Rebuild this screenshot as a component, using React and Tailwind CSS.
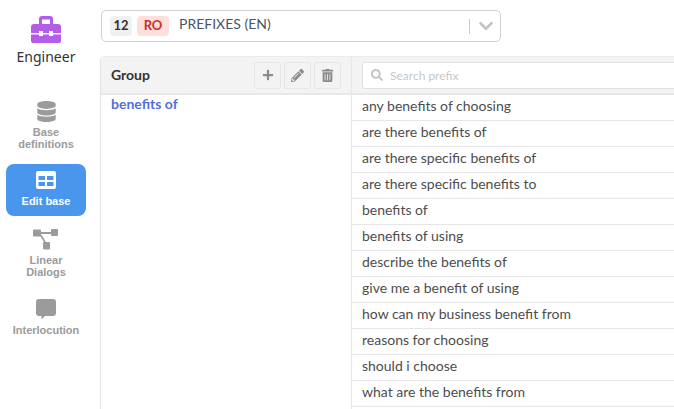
import { ChevronDown } from 'lucide-react';
import { FaPlus, FaPencilAlt, FaTrashAlt, FaSearch, FaDatabase } from 'react-icons/fa';

const prefixes = [
  'any benefits of choosing',
  'are there benefits of',
  'are there specific benefits of',
  'are there specific benefits to',
  'benefits of',
  'benefits of using',
  'describe the benefits of',
  'give me a benefit of using',
  'how can my business benefit from',
  'reasons for choosing',
  'should i choose',
  'what are the benefits from',
];

function ToolboxIcon() {
  return (
    <svg width="30" height="27" viewBox="0 0 30 27" fill="#b45de8">
      <path d="M8 8V3a3 3 0 0 1 3-3h8a3 3 0 0 1 3 3v5h-3V3.500h-8V8Z" />
      <path d="M3 8h24a3 3 0 0 1 3 3v6H22v-2h-4v2h-6v-2H8v2H0v-6a3 3 0 0 1 3-3Z" />
      <path d="M0 18.500h8V20h4v-1.500h6V20h4v-1.500h8V25a2 2 0 0 1-2 2H2a2 2 0 0 1-2-2Z" />
    </svg>
  );
}

function TableIcon() {
  return (
    <svg width="20" height="18" viewBox="0 0 20 18">
      <rect width="20" height="18" rx="2" fill="#fff" />
      <rect x="2.500" y="5" width="6.500" height="4" fill="#4a96ec" />
      <rect x="11" y="5" width="6.500" height="4" fill="#4a96ec" />
      <rect x="2.500" y="11" width="6.500" height="4" fill="#4a96ec" />
      <rect x="11" y="11" width="6.500" height="4" fill="#4a96ec" />
    </svg>
  );
}

function SitemapIcon() {
  return (
    <svg width="26" height="21" viewBox="0 0 26 21" fill="#9b9b9b">
      <rect x="0" y="0.500" width="8" height="7" rx="1" />
      <rect x="18" y="0" width="7" height="7" rx="1" />
      <rect x="10" y="13" width="7" height="7.500" rx="1" />
      <path d="M8 3h10v2H8z" />
      <path d="M7 6.500l1.500-.8 4.500 7.500-1.500.8z" />
    </svg>
  );
}

function CommentIcon() {
  return (
    <svg width="20" height="21" viewBox="0 0 20 21" fill="#9b9b9b">
      <path d="M3 0h14a3 3 0 0 1 3 3v11a3 3 0 0 1-3 3H9l-3.500 3.500V17H3a3 3 0 0 1-3-3V3a3 3 0 0 1 3-3Z" />
    </svg>
  );
}

function NavItem({ icon, label }) {
  return (
    <div className="flex flex-col items-center w-20 text-[11px] leading-3 font-bold text-center text-[#9b9b9b] font-['Liberation_Sans',sans-serif]">
      <div className="h-[21px] flex items-center justify-center mb-1">{icon}</div>
      {label}
    </div>
  );
}

function ToolButton({ children }) {
  return (
    <button className="w-[27px] h-[27px] flex items-center justify-center rounded-[3px] border border-[#e6e6e6] bg-[#f3f3f3] text-[#8c8c8c]">
      {children}
    </button>
  );
}

export default function App() {
  return (
    <div className="flex h-[409px] w-[674px] overflow-hidden bg-white font-['Lato',sans-serif]">
      <aside className="w-[100px] shrink-0 flex flex-col items-center pt-4 pr-2">
        <ToolboxIcon />
        <div className="mt-[4px] text-sm leading-5 text-[#333] font-['Noto_Sans',sans-serif]">Engineer</div>
        <nav className="mt-[34px] flex flex-col items-center">
          <NavItem icon={<FaDatabase size={21} color="#9b9b9b" />} label={<>Base<br />definitions</>} />
          <div className="mt-[14px] mb-[13px] flex flex-col items-center justify-center w-20 h-[52px] pb-[2px] rounded-lg bg-[#4a96ec] text-white text-[11px] leading-3 font-bold font-['Liberation_Sans',sans-serif]">
            <div className="mb-[6px]"><TableIcon /></div>
            Edit base
          </div>
          <NavItem icon={<SitemapIcon />} label={<>Linear<br />Dialogs</>} />
          <div className="mt-[21px]">
            <NavItem icon={<CommentIcon />} label="Interlocution" />
          </div>
        </nav>
      </aside>

      <main className="flex-1 min-w-0 flex flex-col pt-[10px]">
        <div className="ml-px w-[400px] h-[32px] shrink-0 flex items-center border border-[#cfcfcf] rounded-[5px] pl-2 pr-[3px]">
          <span className="w-[22px] h-5 flex items-center justify-center rounded bg-[#f0f0f0] text-[13px] font-bold text-[#333]">12</span>
          <span className="ml-[5px] w-[32px] h-5 flex items-center justify-center rounded bg-[#ffdfdc] text-[13px] font-bold text-[#c9302c]">RO</span>
          <span className="ml-[10px] flex-1 text-sm text-[#4a5568] -mt-[5px]">PREFIXES (EN)</span>
          <span className="w-px h-[15px] bg-[#c8c8c8]" />
          <ChevronDown className="ml-[5px] text-[#c4c4c4]" size={22} strokeWidth={3} />
        </div>

        <div className="mt-[14px] flex-1 min-h-0 flex flex-col border-l border-[#e3e3e3] rounded-tl-[5px] overflow-hidden">
          <div className="h-[39px] shrink-0 flex bg-[#f3f3f3] border-t border-[#ebebeb] border-b-2 border-b-[#e8e8e8]">
            <div className="w-[251px] shrink-0 flex items-center px-[10px] border-r border-[#e6e6e6]">
              <span className="flex-1 text-sm font-bold text-[#333]">Group</span>
              <div className="flex gap-[3px]">
                <ToolButton><FaPlus size={12} /></ToolButton>
                <ToolButton><FaPencilAlt size={13} /></ToolButton>
                <ToolButton><FaTrashAlt size={13} /></ToolButton>
              </div>
            </div>
            <div className="flex-1 flex items-center pl-[10px] -mr-2">
              <div className="flex-1 h-[27px] flex items-center bg-white border border-[#e0e0e0] rounded-l-[3px] pl-2">
                <FaSearch size={12} className="text-[#c4c4c4]" />
                <span className="ml-[7px] pt-0.5 text-xs text-[#c8c8c8]">Search prefix</span>
              </div>
            </div>
          </div>

          <div className="flex-1 min-h-0 flex">
            <div className="w-[251px] shrink-0 border-r border-[#e6e6e6] pl-[10px]">
              <div className="-mt-px text-sm leading-5 font-bold text-[#4f6fe0]">benefits of</div>
            </div>
            <ul className="flex-1">
              {prefixes.map((p) => (
                <li key={p} className="h-[26px] pb-1 flex items-center pl-[10px] text-sm text-[#4d4d4d] border-b border-[#e6e6e6]">{p}</li>
              ))}
            </ul>
          </div>
        </div>
      </main>
    </div>
  );
}
